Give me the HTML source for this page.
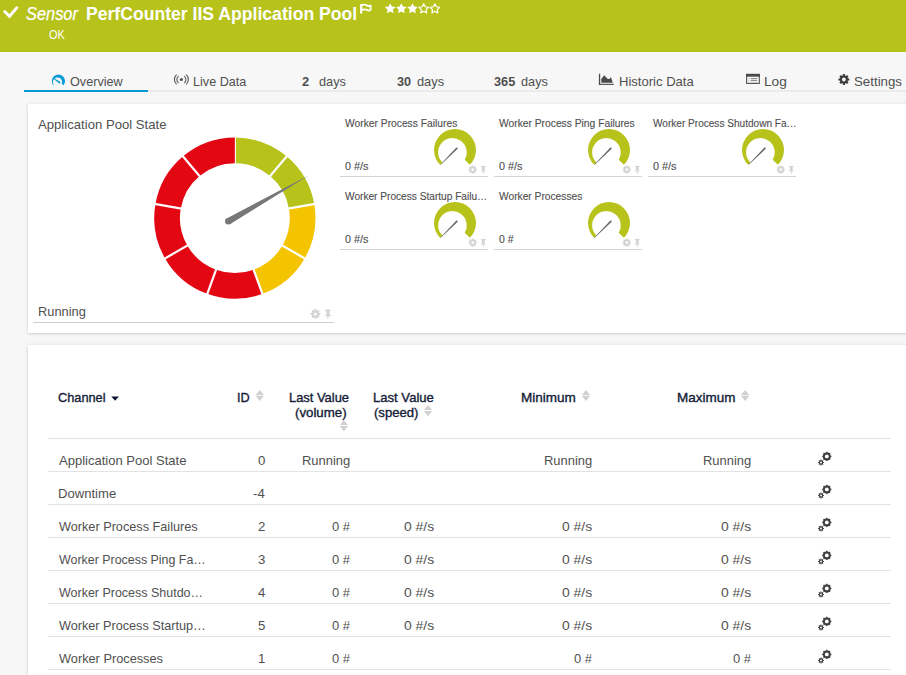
<!DOCTYPE html>
<html><head><meta charset="utf-8"><style>
html,body{margin:0;padding:0;width:906px;height:675px;overflow:hidden;background:#f7f7f7;font-family:"Liberation Sans", sans-serif;}
</style></head><body>
<div style="position:absolute;left:0px;top:0px;width:906px;height:52px;background:#b7c31b"></div><svg style="position:absolute;left:0;top:0" width="30" height="30"><path d="M3.9 10.8 L9.5 16.3 L17.6 6.9" fill="none" stroke="#fff" stroke-width="2.9"/></svg><div style="position:absolute;left:26.30px;top:1px;font-size:18.5px;line-height:25px;color:#fff;font-weight:normal;font-style:italic;-webkit-text-stroke:0.25px #fff;white-space:nowrap;transform:scaleX(0.8850);transform-origin:0 0">Sensor</div><div style="position:absolute;left:85.65px;top:1px;font-size:18.5px;line-height:25px;color:#fff;font-weight:bold;font-style:normal;-webkit-text-stroke:0px #fff;white-space:nowrap;transform:scaleX(0.9512);transform-origin:0 0">PerfCounter IIS Application Pool</div><svg style="position:absolute;left:0;top:0" width="380" height="20"><rect x="360.1" y="4.1" width="2.1" height="9.5" fill="#fff"/><path d="M361.5 5.5 C363.5 4.3 365.5 4.6 367.2 5.6 C368.6 6.3 369.8 6.1 370.6 5.4 V9.9 C369.8 10.6 368.6 10.8 367.2 10 C365.5 9.2 363.5 9.1 361.5 10.1" fill="none" stroke="#fff" stroke-width="1.8" stroke-linejoin="round"/></svg><svg style="position:absolute;left:0;top:0" width="450" height="20"><polygon points="390.20,3.20 388.55,6.53 384.87,7.07 387.54,9.67 386.91,13.33 390.20,11.60 393.49,13.33 392.86,9.67 395.53,7.07 391.85,6.53" fill="#fff"/><polygon points="401.37,3.20 399.72,6.53 396.04,7.07 398.71,9.67 398.08,13.33 401.37,11.60 404.66,13.33 404.03,9.67 406.70,7.07 403.02,6.53" fill="#fff"/><polygon points="412.54,3.20 410.89,6.53 407.21,7.07 409.88,9.67 409.25,13.33 412.54,11.60 415.83,13.33 415.20,9.67 417.87,7.07 414.19,6.53" fill="#fff"/><polygon points="423.71,3.80 422.24,6.78 418.95,7.25 421.33,9.57 420.77,12.85 423.71,11.30 426.65,12.85 426.09,9.57 428.47,7.25 425.18,6.78" fill="none" stroke="#fff" stroke-width="1.2" stroke-linejoin="round"/><polygon points="434.88,3.80 433.41,6.78 430.12,7.25 432.50,9.57 431.94,12.85 434.88,11.30 437.82,12.85 437.26,9.57 439.64,7.25 436.35,6.78" fill="none" stroke="#fff" stroke-width="1.2" stroke-linejoin="round"/></svg><div style="position:absolute;left:49.00px;top:26px;font-size:13px;line-height:17px;color:#fff;font-weight:normal;font-style:normal;-webkit-text-stroke:0px #fff;white-space:nowrap;transform:scaleX(0.8421);transform-origin:0 0">OK</div><div style="position:absolute;left:148px;top:90px;width:758px;height:2px;background:#ebebeb"></div><div style="position:absolute;left:24px;top:90px;width:124px;height:2px;background:#0599d6"></div><div style="position:absolute;left:70.30px;top:73px;font-size:13px;line-height:17px;color:#505050;font-weight:normal;font-style:normal;-webkit-text-stroke:0px #505050;white-space:nowrap;transform:scaleX(0.9722);transform-origin:0 0">Overview</div><div style="position:absolute;left:192.63px;top:73px;font-size:13px;line-height:17px;color:#505050;font-weight:normal;font-style:normal;-webkit-text-stroke:0px #505050;white-space:nowrap;transform:scaleX(0.9704);transform-origin:0 0">Live Data</div><div style="position:absolute;left:302.00px;top:73px;font-size:13px;line-height:17px;color:#505050;font-weight:bold;font-style:normal;-webkit-text-stroke:0px #505050;white-space:nowrap;transform:scaleX(1.0000);transform-origin:0 0">2</div><div style="position:absolute;left:318.50px;top:73px;font-size:13px;line-height:17px;color:#505050;font-weight:normal;font-style:normal;-webkit-text-stroke:0px #505050;white-space:nowrap;transform:scaleX(0.9815);transform-origin:0 0">days</div><div style="position:absolute;left:397.20px;top:73px;font-size:13px;line-height:17px;color:#505050;font-weight:bold;font-style:normal;-webkit-text-stroke:0px #505050;white-space:nowrap;transform:scaleX(0.9786);transform-origin:0 0">30</div><div style="position:absolute;left:417.00px;top:73px;font-size:13px;line-height:17px;color:#505050;font-weight:normal;font-style:normal;-webkit-text-stroke:0px #505050;white-space:nowrap;transform:scaleX(0.9852);transform-origin:0 0">days</div><div style="position:absolute;left:494.30px;top:73px;font-size:13px;line-height:17px;color:#505050;font-weight:bold;font-style:normal;-webkit-text-stroke:0px #505050;white-space:nowrap;transform:scaleX(0.9773);transform-origin:0 0">365</div><div style="position:absolute;left:520.60px;top:73px;font-size:13px;line-height:17px;color:#505050;font-weight:normal;font-style:normal;-webkit-text-stroke:0px #505050;white-space:nowrap;transform:scaleX(0.9778);transform-origin:0 0">days</div><div style="position:absolute;left:619.30px;top:73px;font-size:13px;line-height:17px;color:#505050;font-weight:normal;font-style:normal;-webkit-text-stroke:0px #505050;white-space:nowrap;transform:scaleX(1.0041);transform-origin:0 0">Historic Data</div><div style="position:absolute;left:764.35px;top:73px;font-size:13px;line-height:17px;color:#505050;font-weight:normal;font-style:normal;-webkit-text-stroke:0px #505050;white-space:nowrap;transform:scaleX(1.0500);transform-origin:0 0">Log</div><div style="position:absolute;left:853.98px;top:73px;font-size:13px;line-height:17px;color:#505050;font-weight:normal;font-style:normal;-webkit-text-stroke:0px #505050;white-space:nowrap;transform:scaleX(1.0217);transform-origin:0 0">Settings</div><svg style="position:absolute;left:0;top:0" width="906" height="100"><path d="M53.20 85.26 A6.6 6.6 0 1 1 63.60 85.26 L61.76 83.83 A4.6 4.6 0 1 0 53.78 84.81 Z" fill="#0599d6"/><path d="M54.07 79.23 L59.08 83.34 A0.9 0.9 0 0 0 60.12 81.86 L54.53 78.57 Z" fill="#0599d6"/><circle cx="181.4" cy="79.5" r="1.6" fill="#555"/><path d="M178.6 76.1 A4.2 4.2 0 0 0 178.6 82.9 M184.2 76.1 A4.2 4.2 0 0 1 184.2 82.9" fill="none" stroke="#555" stroke-width="1.1"/><path d="M176.6 74.6 A6.6 6.6 0 0 0 176.6 84.4 M186.2 74.6 A6.6 6.6 0 0 1 186.2 84.4" fill="none" stroke="#555" stroke-width="1.1"/><rect x="598.9" y="73.8" width="1.3" height="11" fill="#4a4a4a"/><rect x="598.9" y="83.8" width="14.9" height="1.1" fill="#4a4a4a"/><path d="M601.3 82.8 L601.3 78.9 L604.2 75.2 L607.8 79 L609.5 79 L610.9 77.1 L612.8 82.8 Z" fill="#4a4a4a"/><rect x="746.6" y="74.4" width="12.7" height="9" fill="none" stroke="#4a4a4a" stroke-width="1.05"/><rect x="746.1" y="73.9" width="13.7" height="2.8" fill="#4a4a4a"/><path d="M750.8 78.6 H757.2 M750.8 80.4 H757.2" stroke="#777" stroke-width="0.9"/><path d="M748.3 78.6 H749.6 M748.3 80.4 H749.6" stroke="#bbb" stroke-width="0.9"/><path d="M748.3 82.2 H757.2" stroke="#ccc" stroke-width="0.9"/><g transform="translate(843.9,79.5)"><circle r="3.9" fill="#3a3a3a"/><rect x="-1.1" y="-5.4" width="2.2" height="2.4" fill="#3a3a3a" transform="rotate(0)"/><rect x="-1.1" y="-5.4" width="2.2" height="2.4" fill="#3a3a3a" transform="rotate(45)"/><rect x="-1.1" y="-5.4" width="2.2" height="2.4" fill="#3a3a3a" transform="rotate(90)"/><rect x="-1.1" y="-5.4" width="2.2" height="2.4" fill="#3a3a3a" transform="rotate(135)"/><rect x="-1.1" y="-5.4" width="2.2" height="2.4" fill="#3a3a3a" transform="rotate(180)"/><rect x="-1.1" y="-5.4" width="2.2" height="2.4" fill="#3a3a3a" transform="rotate(225)"/><rect x="-1.1" y="-5.4" width="2.2" height="2.4" fill="#3a3a3a" transform="rotate(270)"/><rect x="-1.1" y="-5.4" width="2.2" height="2.4" fill="#3a3a3a" transform="rotate(315)"/><circle r="1.9" fill="#f7f7f7"/></g></svg><div style="position:absolute;left:28px;top:104px;width:900px;height:229px;background:#fff;box-shadow:0 1px 2px rgba(0,0,0,0.13),0 0 5px rgba(0,0,0,0.08)"></div><div style="position:absolute;left:38.30px;top:116px;font-size:13px;line-height:17px;color:#505050;font-weight:normal;font-style:normal;-webkit-text-stroke:0px #505050;white-space:nowrap;transform:scaleX(1.0102);transform-origin:0 0">Application Pool State</div><div style="position:absolute;left:37.61px;top:303px;font-size:13px;line-height:17px;color:#505050;font-weight:normal;font-style:normal;-webkit-text-stroke:0px #505050;white-space:nowrap;transform:scaleX(0.9872);transform-origin:0 0">Running</div><div style="position:absolute;left:33px;top:322px;width:301px;height:1px;background:#d0d0d0"></div><svg style="position:absolute;left:0;top:0" width="906" height="675"><path d="M234.85 137.50 A80.6 80.6 0 0 1 286.66 156.36 L270.14 176.04 A54.9 54.9 0 0 0 234.85 163.20 Z" fill="#b7c31b"/><path d="M234.85 218.10 L234.85 129.44" stroke="#fff" stroke-width="2.2"/><path d="M286.66 156.36 A80.6 80.6 0 0 1 314.23 204.10 L288.92 208.57 A54.9 54.9 0 0 0 270.14 176.04 Z" fill="#b7c31b"/><path d="M234.85 218.10 L291.84 150.18" stroke="#fff" stroke-width="2.2"/><path d="M314.23 204.10 A80.6 80.6 0 0 1 304.65 258.40 L282.39 245.55 A54.9 54.9 0 0 0 288.92 208.57 Z" fill="#f5c400"/><path d="M234.85 218.10 L322.16 202.70" stroke="#fff" stroke-width="2.2"/><path d="M304.65 258.40 A80.6 80.6 0 0 1 262.42 293.84 L253.63 269.69 A54.9 54.9 0 0 0 282.39 245.55 Z" fill="#f5c400"/><path d="M234.85 218.10 L311.63 262.43" stroke="#fff" stroke-width="2.2"/><path d="M262.42 293.84 A80.6 80.6 0 0 1 207.28 293.84 L216.07 269.69 A54.9 54.9 0 0 0 253.63 269.69 Z" fill="#e30613"/><path d="M234.85 218.10 L265.17 301.41" stroke="#fff" stroke-width="2.2"/><path d="M207.28 293.84 A80.6 80.6 0 0 1 165.05 258.40 L187.31 245.55 A54.9 54.9 0 0 0 216.07 269.69 Z" fill="#e30613"/><path d="M234.85 218.10 L204.53 301.41" stroke="#fff" stroke-width="2.2"/><path d="M165.05 258.40 A80.6 80.6 0 0 1 155.47 204.10 L180.78 208.57 A54.9 54.9 0 0 0 187.31 245.55 Z" fill="#e30613"/><path d="M234.85 218.10 L158.07 262.43" stroke="#fff" stroke-width="2.2"/><path d="M155.47 204.10 A80.6 80.6 0 0 1 183.04 156.36 L199.56 176.04 A54.9 54.9 0 0 0 180.78 208.57 Z" fill="#e30613"/><path d="M234.85 218.10 L147.54 202.70" stroke="#fff" stroke-width="2.2"/><path d="M183.04 156.36 A80.6 80.6 0 0 1 234.85 137.50 L234.85 163.20 A54.9 54.9 0 0 0 199.56 176.04 Z" fill="#e30613"/><path d="M234.85 218.10 L177.86 150.18" stroke="#fff" stroke-width="2.2"/><path d="M229.94 224.16 L308.90 175.20 L226.66 218.44 Z" fill="#777"/><circle cx="228.30" cy="221.30" r="3.3" fill="#777"/></svg><div style="position:absolute;left:345.20px;top:117px;font-size:10px;line-height:13px;color:#505050;font-weight:normal;font-style:normal;-webkit-text-stroke:0.12px #505050;white-space:nowrap;transform:scaleX(1.0275);transform-origin:0 0">Worker Process Failures</div><div style="position:absolute;left:345.20px;top:160px;font-size:10px;line-height:13px;color:#505050;font-weight:normal;font-style:normal;-webkit-text-stroke:0.12px #505050;white-space:nowrap;transform:scaleX(1.0864);transform-origin:0 0">0 #/s</div><div style="position:absolute;left:340px;top:176px;width:148px;height:1px;background:#d4d4d4"></div><div style="position:absolute;left:499.20px;top:117px;font-size:10px;line-height:13px;color:#505050;font-weight:normal;font-style:normal;-webkit-text-stroke:0.12px #505050;white-space:nowrap;transform:scaleX(1.0273);transform-origin:0 0">Worker Process Ping Failures</div><div style="position:absolute;left:499.20px;top:160px;font-size:10px;line-height:13px;color:#505050;font-weight:normal;font-style:normal;-webkit-text-stroke:0.12px #505050;white-space:nowrap;transform:scaleX(1.0864);transform-origin:0 0">0 #/s</div><div style="position:absolute;left:494px;top:176px;width:148px;height:1px;background:#d4d4d4"></div><div style="position:absolute;left:653.20px;top:117px;font-size:10px;line-height:13px;color:#505050;font-weight:normal;font-style:normal;-webkit-text-stroke:0.12px #505050;white-space:nowrap;transform:scaleX(1.0070);transform-origin:0 0">Worker Process Shutdown Fa&#8230;</div><div style="position:absolute;left:653.20px;top:160px;font-size:10px;line-height:13px;color:#505050;font-weight:normal;font-style:normal;-webkit-text-stroke:0.12px #505050;white-space:nowrap;transform:scaleX(1.0864);transform-origin:0 0">0 #/s</div><div style="position:absolute;left:648px;top:176px;width:148px;height:1px;background:#d4d4d4"></div><div style="position:absolute;left:345.20px;top:190px;font-size:10px;line-height:13px;color:#505050;font-weight:normal;font-style:normal;-webkit-text-stroke:0.12px #505050;white-space:nowrap;transform:scaleX(1.0129);transform-origin:0 0">Worker Process Startup Failu&#8230;</div><div style="position:absolute;left:345.20px;top:233px;font-size:10px;line-height:13px;color:#505050;font-weight:normal;font-style:normal;-webkit-text-stroke:0.12px #505050;white-space:nowrap;transform:scaleX(1.0864);transform-origin:0 0">0 #/s</div><div style="position:absolute;left:340px;top:249px;width:148px;height:1px;background:#d4d4d4"></div><div style="position:absolute;left:499.20px;top:190px;font-size:10px;line-height:13px;color:#505050;font-weight:normal;font-style:normal;-webkit-text-stroke:0.12px #505050;white-space:nowrap;transform:scaleX(1.0220);transform-origin:0 0">Worker Processes</div><div style="position:absolute;left:499.20px;top:233px;font-size:10px;line-height:13px;color:#505050;font-weight:normal;font-style:normal;-webkit-text-stroke:0.12px #505050;white-space:nowrap;transform:scaleX(1.0429);transform-origin:0 0">0 #</div><div style="position:absolute;left:494px;top:249px;width:148px;height:1px;background:#d4d4d4"></div><svg style="position:absolute;left:0;top:0" width="906" height="675"><path d="M440.15 164.85 A21 21 0 1 1 469.85 164.85 L464.70 159.70 A14.3 14.3 0 1 0 442.39 162.61 Z" fill="#b7c31b"/><path d="M440.81 164.81 L457.44 149.04 A0.9 0.9 0 0 0 456.16 147.76 L440.39 164.39 Z" fill="#666"/><path d="M594.15 164.85 A21 21 0 1 1 623.85 164.85 L618.70 159.70 A14.3 14.3 0 1 0 596.39 162.61 Z" fill="#b7c31b"/><path d="M594.81 164.81 L611.44 149.04 A0.9 0.9 0 0 0 610.16 147.76 L594.39 164.39 Z" fill="#666"/><path d="M748.15 164.85 A21 21 0 1 1 777.85 164.85 L772.70 159.70 A14.3 14.3 0 1 0 750.39 162.61 Z" fill="#b7c31b"/><path d="M748.81 164.81 L765.44 149.04 A0.9 0.9 0 0 0 764.16 147.76 L748.39 164.39 Z" fill="#666"/><path d="M440.15 237.85 A21 21 0 1 1 469.85 237.85 L464.70 232.70 A14.3 14.3 0 1 0 442.39 235.61 Z" fill="#b7c31b"/><path d="M440.81 237.81 L457.44 222.04 A0.9 0.9 0 0 0 456.16 220.76 L440.39 237.39 Z" fill="#666"/><path d="M594.15 237.85 A21 21 0 1 1 623.85 237.85 L618.70 232.70 A14.3 14.3 0 1 0 596.39 235.61 Z" fill="#b7c31b"/><path d="M594.81 237.81 L611.44 222.04 A0.9 0.9 0 0 0 610.16 220.76 L594.39 237.39 Z" fill="#666"/><g transform="translate(315.50,313.90) scale(1.17)"><circle r="3.1" fill="#d3d3d3"/><rect x="-0.85" y="-4.1" width="1.7" height="1.6" fill="#d3d3d3" transform="rotate(0)"/><rect x="-0.85" y="-4.1" width="1.7" height="1.6" fill="#d3d3d3" transform="rotate(45)"/><rect x="-0.85" y="-4.1" width="1.7" height="1.6" fill="#d3d3d3" transform="rotate(90)"/><rect x="-0.85" y="-4.1" width="1.7" height="1.6" fill="#d3d3d3" transform="rotate(135)"/><rect x="-0.85" y="-4.1" width="1.7" height="1.6" fill="#d3d3d3" transform="rotate(180)"/><rect x="-0.85" y="-4.1" width="1.7" height="1.6" fill="#d3d3d3" transform="rotate(225)"/><rect x="-0.85" y="-4.1" width="1.7" height="1.6" fill="#d3d3d3" transform="rotate(270)"/><rect x="-0.85" y="-4.1" width="1.7" height="1.6" fill="#d3d3d3" transform="rotate(315)"/><circle r="1.3" fill="#fff"/></g><g transform="translate(327.90,313.90) scale(1.17)"><rect x="-2.3" y="-3.7" width="4.6" height="1.1" fill="#d3d3d3"/><rect x="-1.4" y="-3.2" width="2.8" height="4" fill="#d3d3d3"/><path d="M-1.4 0.6 L-3 2 H3 L1.4 0.6 Z" fill="#d3d3d3"/><rect x="-0.45" y="2" width="0.9" height="2.3" fill="#d3d3d3"/></g><g transform="translate(472.70,169.60) scale(1.0)"><circle r="3.1" fill="#d3d3d3"/><rect x="-0.85" y="-4.1" width="1.7" height="1.6" fill="#d3d3d3" transform="rotate(0)"/><rect x="-0.85" y="-4.1" width="1.7" height="1.6" fill="#d3d3d3" transform="rotate(45)"/><rect x="-0.85" y="-4.1" width="1.7" height="1.6" fill="#d3d3d3" transform="rotate(90)"/><rect x="-0.85" y="-4.1" width="1.7" height="1.6" fill="#d3d3d3" transform="rotate(135)"/><rect x="-0.85" y="-4.1" width="1.7" height="1.6" fill="#d3d3d3" transform="rotate(180)"/><rect x="-0.85" y="-4.1" width="1.7" height="1.6" fill="#d3d3d3" transform="rotate(225)"/><rect x="-0.85" y="-4.1" width="1.7" height="1.6" fill="#d3d3d3" transform="rotate(270)"/><rect x="-0.85" y="-4.1" width="1.7" height="1.6" fill="#d3d3d3" transform="rotate(315)"/><circle r="1.3" fill="#fff"/></g><g transform="translate(483.30,169.60) scale(1.0)"><rect x="-2.3" y="-3.7" width="4.6" height="1.1" fill="#d3d3d3"/><rect x="-1.4" y="-3.2" width="2.8" height="4" fill="#d3d3d3"/><path d="M-1.4 0.6 L-3 2 H3 L1.4 0.6 Z" fill="#d3d3d3"/><rect x="-0.45" y="2" width="0.9" height="2.3" fill="#d3d3d3"/></g><g transform="translate(626.70,169.60) scale(1.0)"><circle r="3.1" fill="#d3d3d3"/><rect x="-0.85" y="-4.1" width="1.7" height="1.6" fill="#d3d3d3" transform="rotate(0)"/><rect x="-0.85" y="-4.1" width="1.7" height="1.6" fill="#d3d3d3" transform="rotate(45)"/><rect x="-0.85" y="-4.1" width="1.7" height="1.6" fill="#d3d3d3" transform="rotate(90)"/><rect x="-0.85" y="-4.1" width="1.7" height="1.6" fill="#d3d3d3" transform="rotate(135)"/><rect x="-0.85" y="-4.1" width="1.7" height="1.6" fill="#d3d3d3" transform="rotate(180)"/><rect x="-0.85" y="-4.1" width="1.7" height="1.6" fill="#d3d3d3" transform="rotate(225)"/><rect x="-0.85" y="-4.1" width="1.7" height="1.6" fill="#d3d3d3" transform="rotate(270)"/><rect x="-0.85" y="-4.1" width="1.7" height="1.6" fill="#d3d3d3" transform="rotate(315)"/><circle r="1.3" fill="#fff"/></g><g transform="translate(637.30,169.60) scale(1.0)"><rect x="-2.3" y="-3.7" width="4.6" height="1.1" fill="#d3d3d3"/><rect x="-1.4" y="-3.2" width="2.8" height="4" fill="#d3d3d3"/><path d="M-1.4 0.6 L-3 2 H3 L1.4 0.6 Z" fill="#d3d3d3"/><rect x="-0.45" y="2" width="0.9" height="2.3" fill="#d3d3d3"/></g><g transform="translate(780.70,169.60) scale(1.0)"><circle r="3.1" fill="#d3d3d3"/><rect x="-0.85" y="-4.1" width="1.7" height="1.6" fill="#d3d3d3" transform="rotate(0)"/><rect x="-0.85" y="-4.1" width="1.7" height="1.6" fill="#d3d3d3" transform="rotate(45)"/><rect x="-0.85" y="-4.1" width="1.7" height="1.6" fill="#d3d3d3" transform="rotate(90)"/><rect x="-0.85" y="-4.1" width="1.7" height="1.6" fill="#d3d3d3" transform="rotate(135)"/><rect x="-0.85" y="-4.1" width="1.7" height="1.6" fill="#d3d3d3" transform="rotate(180)"/><rect x="-0.85" y="-4.1" width="1.7" height="1.6" fill="#d3d3d3" transform="rotate(225)"/><rect x="-0.85" y="-4.1" width="1.7" height="1.6" fill="#d3d3d3" transform="rotate(270)"/><rect x="-0.85" y="-4.1" width="1.7" height="1.6" fill="#d3d3d3" transform="rotate(315)"/><circle r="1.3" fill="#fff"/></g><g transform="translate(791.30,169.60) scale(1.0)"><rect x="-2.3" y="-3.7" width="4.6" height="1.1" fill="#d3d3d3"/><rect x="-1.4" y="-3.2" width="2.8" height="4" fill="#d3d3d3"/><path d="M-1.4 0.6 L-3 2 H3 L1.4 0.6 Z" fill="#d3d3d3"/><rect x="-0.45" y="2" width="0.9" height="2.3" fill="#d3d3d3"/></g><g transform="translate(472.70,242.60) scale(1.0)"><circle r="3.1" fill="#d3d3d3"/><rect x="-0.85" y="-4.1" width="1.7" height="1.6" fill="#d3d3d3" transform="rotate(0)"/><rect x="-0.85" y="-4.1" width="1.7" height="1.6" fill="#d3d3d3" transform="rotate(45)"/><rect x="-0.85" y="-4.1" width="1.7" height="1.6" fill="#d3d3d3" transform="rotate(90)"/><rect x="-0.85" y="-4.1" width="1.7" height="1.6" fill="#d3d3d3" transform="rotate(135)"/><rect x="-0.85" y="-4.1" width="1.7" height="1.6" fill="#d3d3d3" transform="rotate(180)"/><rect x="-0.85" y="-4.1" width="1.7" height="1.6" fill="#d3d3d3" transform="rotate(225)"/><rect x="-0.85" y="-4.1" width="1.7" height="1.6" fill="#d3d3d3" transform="rotate(270)"/><rect x="-0.85" y="-4.1" width="1.7" height="1.6" fill="#d3d3d3" transform="rotate(315)"/><circle r="1.3" fill="#fff"/></g><g transform="translate(483.30,242.60) scale(1.0)"><rect x="-2.3" y="-3.7" width="4.6" height="1.1" fill="#d3d3d3"/><rect x="-1.4" y="-3.2" width="2.8" height="4" fill="#d3d3d3"/><path d="M-1.4 0.6 L-3 2 H3 L1.4 0.6 Z" fill="#d3d3d3"/><rect x="-0.45" y="2" width="0.9" height="2.3" fill="#d3d3d3"/></g><g transform="translate(626.70,242.60) scale(1.0)"><circle r="3.1" fill="#d3d3d3"/><rect x="-0.85" y="-4.1" width="1.7" height="1.6" fill="#d3d3d3" transform="rotate(0)"/><rect x="-0.85" y="-4.1" width="1.7" height="1.6" fill="#d3d3d3" transform="rotate(45)"/><rect x="-0.85" y="-4.1" width="1.7" height="1.6" fill="#d3d3d3" transform="rotate(90)"/><rect x="-0.85" y="-4.1" width="1.7" height="1.6" fill="#d3d3d3" transform="rotate(135)"/><rect x="-0.85" y="-4.1" width="1.7" height="1.6" fill="#d3d3d3" transform="rotate(180)"/><rect x="-0.85" y="-4.1" width="1.7" height="1.6" fill="#d3d3d3" transform="rotate(225)"/><rect x="-0.85" y="-4.1" width="1.7" height="1.6" fill="#d3d3d3" transform="rotate(270)"/><rect x="-0.85" y="-4.1" width="1.7" height="1.6" fill="#d3d3d3" transform="rotate(315)"/><circle r="1.3" fill="#fff"/></g><g transform="translate(637.30,242.60) scale(1.0)"><rect x="-2.3" y="-3.7" width="4.6" height="1.1" fill="#d3d3d3"/><rect x="-1.4" y="-3.2" width="2.8" height="4" fill="#d3d3d3"/><path d="M-1.4 0.6 L-3 2 H3 L1.4 0.6 Z" fill="#d3d3d3"/><rect x="-0.45" y="2" width="0.9" height="2.3" fill="#d3d3d3"/></g></svg><div style="position:absolute;left:28px;top:345px;width:900px;height:400px;background:#fff;box-shadow:0 1px 2px rgba(0,0,0,0.13),0 0 5px rgba(0,0,0,0.08)"></div><div style="position:absolute;left:58.30px;top:389px;font-size:13px;line-height:17px;color:#141c38;font-weight:normal;font-style:normal;-webkit-text-stroke:0.35px #141c38;white-space:nowrap;transform:scaleX(0.9813);transform-origin:0 0">Channel</div><svg style="position:absolute;left:100px;top:390px" width="30" height="20"><path d="M11.3 6.4 H18.9 L15.1 10.7 Z" fill="#0e1430"/></svg><svg style="position:absolute;left:0;top:0" width="906" height="675"><path d="M255.60 394.90 L259.75 390.00 L263.90 394.90 Z M255.60 395.80 L259.75 401.00 L263.90 395.80 Z" fill="#d0d0d0"/><path d="M339.80 425.10 L343.95 420.20 L348.10 425.10 Z M339.80 426.00 L343.95 431.20 L348.10 426.00 Z" fill="#d0d0d0"/><path d="M423.90 410.10 L428.05 405.20 L432.20 410.10 Z M423.90 411.00 L428.05 416.20 L432.20 411.00 Z" fill="#d0d0d0"/><path d="M581.80 394.90 L585.95 390.00 L590.10 394.90 Z M581.80 395.80 L585.95 401.00 L590.10 395.80 Z" fill="#d0d0d0"/><path d="M741.00 394.90 L745.15 390.00 L749.30 394.90 Z M741.00 395.80 L745.15 401.00 L749.30 395.80 Z" fill="#d0d0d0"/></svg><div style="position:absolute;left:237.33px;top:389px;font-size:13px;line-height:17px;color:#141c38;font-weight:normal;font-style:normal;-webkit-text-stroke:0.35px #141c38;white-space:nowrap;transform:scaleX(0.9750);transform-origin:0 0">ID</div><div style="position:absolute;left:288.81px;top:389px;font-size:13px;line-height:17px;color:#141c38;font-weight:normal;font-style:normal;-webkit-text-stroke:0.35px #141c38;white-space:nowrap;transform:scaleX(0.9917);transform-origin:0 0">Last Value</div><div style="position:absolute;left:295.40px;top:404px;font-size:13px;line-height:17px;color:#141c38;font-weight:normal;font-style:normal;-webkit-text-stroke:0.35px #141c38;white-space:nowrap;transform:scaleX(1.0200);transform-origin:0 0">(volume)</div><div style="position:absolute;left:372.59px;top:389px;font-size:13px;line-height:17px;color:#141c38;font-weight:normal;font-style:normal;-webkit-text-stroke:0.35px #141c38;white-space:nowrap;transform:scaleX(1.0067);transform-origin:0 0">Last Value</div><div style="position:absolute;left:373.60px;top:404px;font-size:13px;line-height:17px;color:#141c38;font-weight:normal;font-style:normal;-webkit-text-stroke:0.35px #141c38;white-space:nowrap;transform:scaleX(1.0076);transform-origin:0 0">(speed)</div><div style="position:absolute;left:520.56px;top:389px;font-size:13px;line-height:17px;color:#141c38;font-weight:normal;font-style:normal;-webkit-text-stroke:0.35px #141c38;white-space:nowrap;transform:scaleX(1.0404);transform-origin:0 0">Minimum</div><div style="position:absolute;left:676.56px;top:389px;font-size:13px;line-height:17px;color:#141c38;font-weight:normal;font-style:normal;-webkit-text-stroke:0.35px #141c38;white-space:nowrap;transform:scaleX(1.0382);transform-origin:0 0">Maximum</div><div style="position:absolute;left:48px;top:438px;width:843px;height:1px;background:#e3e3e3"></div><div style="position:absolute;left:58.50px;top:452px;font-size:13px;line-height:17px;color:#505050;font-weight:normal;font-style:normal;-webkit-text-stroke:0px #505050;white-space:nowrap;transform:scaleX(1.0016);transform-origin:0 0">Application Pool State</div><div style="position:absolute;left:258.38px;top:452px;font-size:13px;line-height:17px;color:#505050;font-weight:normal;font-style:normal;-webkit-text-stroke:0px #505050;white-space:nowrap;transform:scaleX(1.0169);transform-origin:0 0">0</div><div style="position:absolute;left:302.20px;top:452px;font-size:13px;line-height:17px;color:#505050;font-weight:normal;font-style:normal;-webkit-text-stroke:0px #505050;white-space:nowrap;transform:scaleX(0.9957);transform-origin:0 0">Running</div><div style="position:absolute;left:544.20px;top:452px;font-size:13px;line-height:17px;color:#505050;font-weight:normal;font-style:normal;-webkit-text-stroke:0px #505050;white-space:nowrap;transform:scaleX(0.9957);transform-origin:0 0">Running</div><div style="position:absolute;left:703.20px;top:452px;font-size:13px;line-height:17px;color:#505050;font-weight:normal;font-style:normal;-webkit-text-stroke:0px #505050;white-space:nowrap;transform:scaleX(0.9957);transform-origin:0 0">Running</div><div style="position:absolute;left:48px;top:471px;width:843px;height:1px;background:#e3e3e3"></div><div style="position:absolute;left:57.89px;top:485px;font-size:13px;line-height:17px;color:#505050;font-weight:normal;font-style:normal;-webkit-text-stroke:0px #505050;white-space:nowrap;transform:scaleX(1.0070);transform-origin:0 0">Downtime</div><div style="position:absolute;left:253.30px;top:485px;font-size:13px;line-height:17px;color:#505050;font-weight:normal;font-style:normal;-webkit-text-stroke:0px #505050;white-space:nowrap;transform:scaleX(1.0169);transform-origin:0 0">-4</div><div style="position:absolute;left:48px;top:504px;width:843px;height:1px;background:#e3e3e3"></div><div style="position:absolute;left:58.50px;top:518px;font-size:13px;line-height:17px;color:#505050;font-weight:normal;font-style:normal;-webkit-text-stroke:0px #505050;white-space:nowrap;transform:scaleX(0.9761);transform-origin:0 0">Worker Process Failures</div><div style="position:absolute;left:258.38px;top:518px;font-size:13px;line-height:17px;color:#505050;font-weight:normal;font-style:normal;-webkit-text-stroke:0px #505050;white-space:nowrap;transform:scaleX(1.0169);transform-origin:0 0">2</div><div style="position:absolute;left:332.00px;top:518px;font-size:13px;line-height:17px;color:#505050;font-weight:normal;font-style:normal;-webkit-text-stroke:0px #505050;white-space:nowrap;transform:scaleX(1.0000);transform-origin:0 0">0 #</div><div style="position:absolute;left:403.70px;top:518px;font-size:13px;line-height:17px;color:#505050;font-weight:normal;font-style:normal;-webkit-text-stroke:0px #505050;white-space:nowrap;transform:scaleX(1.0714);transform-origin:0 0">0 #/s</div><div style="position:absolute;left:562.00px;top:518px;font-size:13px;line-height:17px;color:#505050;font-weight:normal;font-style:normal;-webkit-text-stroke:0px #505050;white-space:nowrap;transform:scaleX(1.0714);transform-origin:0 0">0 #/s</div><div style="position:absolute;left:721.00px;top:518px;font-size:13px;line-height:17px;color:#505050;font-weight:normal;font-style:normal;-webkit-text-stroke:0px #505050;white-space:nowrap;transform:scaleX(1.0714);transform-origin:0 0">0 #/s</div><div style="position:absolute;left:48px;top:537px;width:843px;height:1px;background:#e3e3e3"></div><div style="position:absolute;left:58.50px;top:551px;font-size:13px;line-height:17px;color:#505050;font-weight:normal;font-style:normal;-webkit-text-stroke:0px #505050;white-space:nowrap;transform:scaleX(0.9553);transform-origin:0 0">Worker Process Ping Fa&#8230;</div><div style="position:absolute;left:258.38px;top:551px;font-size:13px;line-height:17px;color:#505050;font-weight:normal;font-style:normal;-webkit-text-stroke:0px #505050;white-space:nowrap;transform:scaleX(1.0169);transform-origin:0 0">3</div><div style="position:absolute;left:332.00px;top:551px;font-size:13px;line-height:17px;color:#505050;font-weight:normal;font-style:normal;-webkit-text-stroke:0px #505050;white-space:nowrap;transform:scaleX(1.0000);transform-origin:0 0">0 #</div><div style="position:absolute;left:403.70px;top:551px;font-size:13px;line-height:17px;color:#505050;font-weight:normal;font-style:normal;-webkit-text-stroke:0px #505050;white-space:nowrap;transform:scaleX(1.0714);transform-origin:0 0">0 #/s</div><div style="position:absolute;left:562.00px;top:551px;font-size:13px;line-height:17px;color:#505050;font-weight:normal;font-style:normal;-webkit-text-stroke:0px #505050;white-space:nowrap;transform:scaleX(1.0714);transform-origin:0 0">0 #/s</div><div style="position:absolute;left:721.00px;top:551px;font-size:13px;line-height:17px;color:#505050;font-weight:normal;font-style:normal;-webkit-text-stroke:0px #505050;white-space:nowrap;transform:scaleX(1.0714);transform-origin:0 0">0 #/s</div><div style="position:absolute;left:48px;top:570px;width:843px;height:1px;background:#e3e3e3"></div><div style="position:absolute;left:58.50px;top:584px;font-size:13px;line-height:17px;color:#505050;font-weight:normal;font-style:normal;-webkit-text-stroke:0px #505050;white-space:nowrap;transform:scaleX(0.9597);transform-origin:0 0">Worker Process Shutdo&#8230;</div><div style="position:absolute;left:258.38px;top:584px;font-size:13px;line-height:17px;color:#505050;font-weight:normal;font-style:normal;-webkit-text-stroke:0px #505050;white-space:nowrap;transform:scaleX(1.0169);transform-origin:0 0">4</div><div style="position:absolute;left:332.00px;top:584px;font-size:13px;line-height:17px;color:#505050;font-weight:normal;font-style:normal;-webkit-text-stroke:0px #505050;white-space:nowrap;transform:scaleX(1.0000);transform-origin:0 0">0 #</div><div style="position:absolute;left:403.70px;top:584px;font-size:13px;line-height:17px;color:#505050;font-weight:normal;font-style:normal;-webkit-text-stroke:0px #505050;white-space:nowrap;transform:scaleX(1.0714);transform-origin:0 0">0 #/s</div><div style="position:absolute;left:562.00px;top:584px;font-size:13px;line-height:17px;color:#505050;font-weight:normal;font-style:normal;-webkit-text-stroke:0px #505050;white-space:nowrap;transform:scaleX(1.0714);transform-origin:0 0">0 #/s</div><div style="position:absolute;left:721.00px;top:584px;font-size:13px;line-height:17px;color:#505050;font-weight:normal;font-style:normal;-webkit-text-stroke:0px #505050;white-space:nowrap;transform:scaleX(1.0714);transform-origin:0 0">0 #/s</div><div style="position:absolute;left:48px;top:603px;width:843px;height:1px;background:#e3e3e3"></div><div style="position:absolute;left:58.50px;top:617px;font-size:13px;line-height:17px;color:#505050;font-weight:normal;font-style:normal;-webkit-text-stroke:0px #505050;white-space:nowrap;transform:scaleX(0.9732);transform-origin:0 0">Worker Process Startup&#8230;</div><div style="position:absolute;left:258.38px;top:617px;font-size:13px;line-height:17px;color:#505050;font-weight:normal;font-style:normal;-webkit-text-stroke:0px #505050;white-space:nowrap;transform:scaleX(1.0169);transform-origin:0 0">5</div><div style="position:absolute;left:332.00px;top:617px;font-size:13px;line-height:17px;color:#505050;font-weight:normal;font-style:normal;-webkit-text-stroke:0px #505050;white-space:nowrap;transform:scaleX(1.0000);transform-origin:0 0">0 #</div><div style="position:absolute;left:403.70px;top:617px;font-size:13px;line-height:17px;color:#505050;font-weight:normal;font-style:normal;-webkit-text-stroke:0px #505050;white-space:nowrap;transform:scaleX(1.0714);transform-origin:0 0">0 #/s</div><div style="position:absolute;left:562.00px;top:617px;font-size:13px;line-height:17px;color:#505050;font-weight:normal;font-style:normal;-webkit-text-stroke:0px #505050;white-space:nowrap;transform:scaleX(1.0714);transform-origin:0 0">0 #/s</div><div style="position:absolute;left:721.00px;top:617px;font-size:13px;line-height:17px;color:#505050;font-weight:normal;font-style:normal;-webkit-text-stroke:0px #505050;white-space:nowrap;transform:scaleX(1.0714);transform-origin:0 0">0 #/s</div><div style="position:absolute;left:48px;top:636px;width:843px;height:1px;background:#e3e3e3"></div><div style="position:absolute;left:58.50px;top:650px;font-size:13px;line-height:17px;color:#505050;font-weight:normal;font-style:normal;-webkit-text-stroke:0px #505050;white-space:nowrap;transform:scaleX(0.9811);transform-origin:0 0">Worker Processes</div><div style="position:absolute;left:258.38px;top:650px;font-size:13px;line-height:17px;color:#505050;font-weight:normal;font-style:normal;-webkit-text-stroke:0px #505050;white-space:nowrap;transform:scaleX(1.0169);transform-origin:0 0">1</div><div style="position:absolute;left:332.00px;top:650px;font-size:13px;line-height:17px;color:#505050;font-weight:normal;font-style:normal;-webkit-text-stroke:0px #505050;white-space:nowrap;transform:scaleX(1.0000);transform-origin:0 0">0 #</div><div style="position:absolute;left:574.00px;top:650px;font-size:13px;line-height:17px;color:#505050;font-weight:normal;font-style:normal;-webkit-text-stroke:0px #505050;white-space:nowrap;transform:scaleX(1.0000);transform-origin:0 0">0 #</div><div style="position:absolute;left:733.00px;top:650px;font-size:13px;line-height:17px;color:#505050;font-weight:normal;font-style:normal;-webkit-text-stroke:0px #505050;white-space:nowrap;transform:scaleX(1.0000);transform-origin:0 0">0 #</div><div style="position:absolute;left:48px;top:669px;width:843px;height:1px;background:#e3e3e3"></div><svg style="position:absolute;left:0;top:0" width="906" height="675"><g transform="translate(826.80,456.40)"><circle r="3.9" fill="#404040"/><rect x="-0.75" y="-4.60" width="1.5" height="1.30" fill="#404040" transform="rotate(0.0)"/><rect x="-0.75" y="-4.60" width="1.5" height="1.30" fill="#404040" transform="rotate(45.0)"/><rect x="-0.75" y="-4.60" width="1.5" height="1.30" fill="#404040" transform="rotate(90.0)"/><rect x="-0.75" y="-4.60" width="1.5" height="1.30" fill="#404040" transform="rotate(135.0)"/><rect x="-0.75" y="-4.60" width="1.5" height="1.30" fill="#404040" transform="rotate(180.0)"/><rect x="-0.75" y="-4.60" width="1.5" height="1.30" fill="#404040" transform="rotate(225.0)"/><rect x="-0.75" y="-4.60" width="1.5" height="1.30" fill="#404040" transform="rotate(270.0)"/><rect x="-0.75" y="-4.60" width="1.5" height="1.30" fill="#404040" transform="rotate(315.0)"/><circle r="1.9" fill="#fff"/></g><g transform="translate(821.00,462.50)"><circle r="2.3" fill="#404040"/><rect x="-0.45" y="-3.00" width="0.9" height="1.30" fill="#404040" transform="rotate(0.0)"/><rect x="-0.45" y="-3.00" width="0.9" height="1.30" fill="#404040" transform="rotate(45.0)"/><rect x="-0.45" y="-3.00" width="0.9" height="1.30" fill="#404040" transform="rotate(90.0)"/><rect x="-0.45" y="-3.00" width="0.9" height="1.30" fill="#404040" transform="rotate(135.0)"/><rect x="-0.45" y="-3.00" width="0.9" height="1.30" fill="#404040" transform="rotate(180.0)"/><rect x="-0.45" y="-3.00" width="0.9" height="1.30" fill="#404040" transform="rotate(225.0)"/><rect x="-0.45" y="-3.00" width="0.9" height="1.30" fill="#404040" transform="rotate(270.0)"/><rect x="-0.45" y="-3.00" width="0.9" height="1.30" fill="#404040" transform="rotate(315.0)"/><circle r="0.95" fill="#fff"/></g><g transform="translate(826.80,489.40)"><circle r="3.9" fill="#404040"/><rect x="-0.75" y="-4.60" width="1.5" height="1.30" fill="#404040" transform="rotate(0.0)"/><rect x="-0.75" y="-4.60" width="1.5" height="1.30" fill="#404040" transform="rotate(45.0)"/><rect x="-0.75" y="-4.60" width="1.5" height="1.30" fill="#404040" transform="rotate(90.0)"/><rect x="-0.75" y="-4.60" width="1.5" height="1.30" fill="#404040" transform="rotate(135.0)"/><rect x="-0.75" y="-4.60" width="1.5" height="1.30" fill="#404040" transform="rotate(180.0)"/><rect x="-0.75" y="-4.60" width="1.5" height="1.30" fill="#404040" transform="rotate(225.0)"/><rect x="-0.75" y="-4.60" width="1.5" height="1.30" fill="#404040" transform="rotate(270.0)"/><rect x="-0.75" y="-4.60" width="1.5" height="1.30" fill="#404040" transform="rotate(315.0)"/><circle r="1.9" fill="#fff"/></g><g transform="translate(821.00,495.50)"><circle r="2.3" fill="#404040"/><rect x="-0.45" y="-3.00" width="0.9" height="1.30" fill="#404040" transform="rotate(0.0)"/><rect x="-0.45" y="-3.00" width="0.9" height="1.30" fill="#404040" transform="rotate(45.0)"/><rect x="-0.45" y="-3.00" width="0.9" height="1.30" fill="#404040" transform="rotate(90.0)"/><rect x="-0.45" y="-3.00" width="0.9" height="1.30" fill="#404040" transform="rotate(135.0)"/><rect x="-0.45" y="-3.00" width="0.9" height="1.30" fill="#404040" transform="rotate(180.0)"/><rect x="-0.45" y="-3.00" width="0.9" height="1.30" fill="#404040" transform="rotate(225.0)"/><rect x="-0.45" y="-3.00" width="0.9" height="1.30" fill="#404040" transform="rotate(270.0)"/><rect x="-0.45" y="-3.00" width="0.9" height="1.30" fill="#404040" transform="rotate(315.0)"/><circle r="0.95" fill="#fff"/></g><g transform="translate(826.80,522.40)"><circle r="3.9" fill="#404040"/><rect x="-0.75" y="-4.60" width="1.5" height="1.30" fill="#404040" transform="rotate(0.0)"/><rect x="-0.75" y="-4.60" width="1.5" height="1.30" fill="#404040" transform="rotate(45.0)"/><rect x="-0.75" y="-4.60" width="1.5" height="1.30" fill="#404040" transform="rotate(90.0)"/><rect x="-0.75" y="-4.60" width="1.5" height="1.30" fill="#404040" transform="rotate(135.0)"/><rect x="-0.75" y="-4.60" width="1.5" height="1.30" fill="#404040" transform="rotate(180.0)"/><rect x="-0.75" y="-4.60" width="1.5" height="1.30" fill="#404040" transform="rotate(225.0)"/><rect x="-0.75" y="-4.60" width="1.5" height="1.30" fill="#404040" transform="rotate(270.0)"/><rect x="-0.75" y="-4.60" width="1.5" height="1.30" fill="#404040" transform="rotate(315.0)"/><circle r="1.9" fill="#fff"/></g><g transform="translate(821.00,528.50)"><circle r="2.3" fill="#404040"/><rect x="-0.45" y="-3.00" width="0.9" height="1.30" fill="#404040" transform="rotate(0.0)"/><rect x="-0.45" y="-3.00" width="0.9" height="1.30" fill="#404040" transform="rotate(45.0)"/><rect x="-0.45" y="-3.00" width="0.9" height="1.30" fill="#404040" transform="rotate(90.0)"/><rect x="-0.45" y="-3.00" width="0.9" height="1.30" fill="#404040" transform="rotate(135.0)"/><rect x="-0.45" y="-3.00" width="0.9" height="1.30" fill="#404040" transform="rotate(180.0)"/><rect x="-0.45" y="-3.00" width="0.9" height="1.30" fill="#404040" transform="rotate(225.0)"/><rect x="-0.45" y="-3.00" width="0.9" height="1.30" fill="#404040" transform="rotate(270.0)"/><rect x="-0.45" y="-3.00" width="0.9" height="1.30" fill="#404040" transform="rotate(315.0)"/><circle r="0.95" fill="#fff"/></g><g transform="translate(826.80,555.40)"><circle r="3.9" fill="#404040"/><rect x="-0.75" y="-4.60" width="1.5" height="1.30" fill="#404040" transform="rotate(0.0)"/><rect x="-0.75" y="-4.60" width="1.5" height="1.30" fill="#404040" transform="rotate(45.0)"/><rect x="-0.75" y="-4.60" width="1.5" height="1.30" fill="#404040" transform="rotate(90.0)"/><rect x="-0.75" y="-4.60" width="1.5" height="1.30" fill="#404040" transform="rotate(135.0)"/><rect x="-0.75" y="-4.60" width="1.5" height="1.30" fill="#404040" transform="rotate(180.0)"/><rect x="-0.75" y="-4.60" width="1.5" height="1.30" fill="#404040" transform="rotate(225.0)"/><rect x="-0.75" y="-4.60" width="1.5" height="1.30" fill="#404040" transform="rotate(270.0)"/><rect x="-0.75" y="-4.60" width="1.5" height="1.30" fill="#404040" transform="rotate(315.0)"/><circle r="1.9" fill="#fff"/></g><g transform="translate(821.00,561.50)"><circle r="2.3" fill="#404040"/><rect x="-0.45" y="-3.00" width="0.9" height="1.30" fill="#404040" transform="rotate(0.0)"/><rect x="-0.45" y="-3.00" width="0.9" height="1.30" fill="#404040" transform="rotate(45.0)"/><rect x="-0.45" y="-3.00" width="0.9" height="1.30" fill="#404040" transform="rotate(90.0)"/><rect x="-0.45" y="-3.00" width="0.9" height="1.30" fill="#404040" transform="rotate(135.0)"/><rect x="-0.45" y="-3.00" width="0.9" height="1.30" fill="#404040" transform="rotate(180.0)"/><rect x="-0.45" y="-3.00" width="0.9" height="1.30" fill="#404040" transform="rotate(225.0)"/><rect x="-0.45" y="-3.00" width="0.9" height="1.30" fill="#404040" transform="rotate(270.0)"/><rect x="-0.45" y="-3.00" width="0.9" height="1.30" fill="#404040" transform="rotate(315.0)"/><circle r="0.95" fill="#fff"/></g><g transform="translate(826.80,588.40)"><circle r="3.9" fill="#404040"/><rect x="-0.75" y="-4.60" width="1.5" height="1.30" fill="#404040" transform="rotate(0.0)"/><rect x="-0.75" y="-4.60" width="1.5" height="1.30" fill="#404040" transform="rotate(45.0)"/><rect x="-0.75" y="-4.60" width="1.5" height="1.30" fill="#404040" transform="rotate(90.0)"/><rect x="-0.75" y="-4.60" width="1.5" height="1.30" fill="#404040" transform="rotate(135.0)"/><rect x="-0.75" y="-4.60" width="1.5" height="1.30" fill="#404040" transform="rotate(180.0)"/><rect x="-0.75" y="-4.60" width="1.5" height="1.30" fill="#404040" transform="rotate(225.0)"/><rect x="-0.75" y="-4.60" width="1.5" height="1.30" fill="#404040" transform="rotate(270.0)"/><rect x="-0.75" y="-4.60" width="1.5" height="1.30" fill="#404040" transform="rotate(315.0)"/><circle r="1.9" fill="#fff"/></g><g transform="translate(821.00,594.50)"><circle r="2.3" fill="#404040"/><rect x="-0.45" y="-3.00" width="0.9" height="1.30" fill="#404040" transform="rotate(0.0)"/><rect x="-0.45" y="-3.00" width="0.9" height="1.30" fill="#404040" transform="rotate(45.0)"/><rect x="-0.45" y="-3.00" width="0.9" height="1.30" fill="#404040" transform="rotate(90.0)"/><rect x="-0.45" y="-3.00" width="0.9" height="1.30" fill="#404040" transform="rotate(135.0)"/><rect x="-0.45" y="-3.00" width="0.9" height="1.30" fill="#404040" transform="rotate(180.0)"/><rect x="-0.45" y="-3.00" width="0.9" height="1.30" fill="#404040" transform="rotate(225.0)"/><rect x="-0.45" y="-3.00" width="0.9" height="1.30" fill="#404040" transform="rotate(270.0)"/><rect x="-0.45" y="-3.00" width="0.9" height="1.30" fill="#404040" transform="rotate(315.0)"/><circle r="0.95" fill="#fff"/></g><g transform="translate(826.80,621.40)"><circle r="3.9" fill="#404040"/><rect x="-0.75" y="-4.60" width="1.5" height="1.30" fill="#404040" transform="rotate(0.0)"/><rect x="-0.75" y="-4.60" width="1.5" height="1.30" fill="#404040" transform="rotate(45.0)"/><rect x="-0.75" y="-4.60" width="1.5" height="1.30" fill="#404040" transform="rotate(90.0)"/><rect x="-0.75" y="-4.60" width="1.5" height="1.30" fill="#404040" transform="rotate(135.0)"/><rect x="-0.75" y="-4.60" width="1.5" height="1.30" fill="#404040" transform="rotate(180.0)"/><rect x="-0.75" y="-4.60" width="1.5" height="1.30" fill="#404040" transform="rotate(225.0)"/><rect x="-0.75" y="-4.60" width="1.5" height="1.30" fill="#404040" transform="rotate(270.0)"/><rect x="-0.75" y="-4.60" width="1.5" height="1.30" fill="#404040" transform="rotate(315.0)"/><circle r="1.9" fill="#fff"/></g><g transform="translate(821.00,627.50)"><circle r="2.3" fill="#404040"/><rect x="-0.45" y="-3.00" width="0.9" height="1.30" fill="#404040" transform="rotate(0.0)"/><rect x="-0.45" y="-3.00" width="0.9" height="1.30" fill="#404040" transform="rotate(45.0)"/><rect x="-0.45" y="-3.00" width="0.9" height="1.30" fill="#404040" transform="rotate(90.0)"/><rect x="-0.45" y="-3.00" width="0.9" height="1.30" fill="#404040" transform="rotate(135.0)"/><rect x="-0.45" y="-3.00" width="0.9" height="1.30" fill="#404040" transform="rotate(180.0)"/><rect x="-0.45" y="-3.00" width="0.9" height="1.30" fill="#404040" transform="rotate(225.0)"/><rect x="-0.45" y="-3.00" width="0.9" height="1.30" fill="#404040" transform="rotate(270.0)"/><rect x="-0.45" y="-3.00" width="0.9" height="1.30" fill="#404040" transform="rotate(315.0)"/><circle r="0.95" fill="#fff"/></g><g transform="translate(826.80,654.40)"><circle r="3.9" fill="#404040"/><rect x="-0.75" y="-4.60" width="1.5" height="1.30" fill="#404040" transform="rotate(0.0)"/><rect x="-0.75" y="-4.60" width="1.5" height="1.30" fill="#404040" transform="rotate(45.0)"/><rect x="-0.75" y="-4.60" width="1.5" height="1.30" fill="#404040" transform="rotate(90.0)"/><rect x="-0.75" y="-4.60" width="1.5" height="1.30" fill="#404040" transform="rotate(135.0)"/><rect x="-0.75" y="-4.60" width="1.5" height="1.30" fill="#404040" transform="rotate(180.0)"/><rect x="-0.75" y="-4.60" width="1.5" height="1.30" fill="#404040" transform="rotate(225.0)"/><rect x="-0.75" y="-4.60" width="1.5" height="1.30" fill="#404040" transform="rotate(270.0)"/><rect x="-0.75" y="-4.60" width="1.5" height="1.30" fill="#404040" transform="rotate(315.0)"/><circle r="1.9" fill="#fff"/></g><g transform="translate(821.00,660.50)"><circle r="2.3" fill="#404040"/><rect x="-0.45" y="-3.00" width="0.9" height="1.30" fill="#404040" transform="rotate(0.0)"/><rect x="-0.45" y="-3.00" width="0.9" height="1.30" fill="#404040" transform="rotate(45.0)"/><rect x="-0.45" y="-3.00" width="0.9" height="1.30" fill="#404040" transform="rotate(90.0)"/><rect x="-0.45" y="-3.00" width="0.9" height="1.30" fill="#404040" transform="rotate(135.0)"/><rect x="-0.45" y="-3.00" width="0.9" height="1.30" fill="#404040" transform="rotate(180.0)"/><rect x="-0.45" y="-3.00" width="0.9" height="1.30" fill="#404040" transform="rotate(225.0)"/><rect x="-0.45" y="-3.00" width="0.9" height="1.30" fill="#404040" transform="rotate(270.0)"/><rect x="-0.45" y="-3.00" width="0.9" height="1.30" fill="#404040" transform="rotate(315.0)"/><circle r="0.95" fill="#fff"/></g></svg>
</body></html>
